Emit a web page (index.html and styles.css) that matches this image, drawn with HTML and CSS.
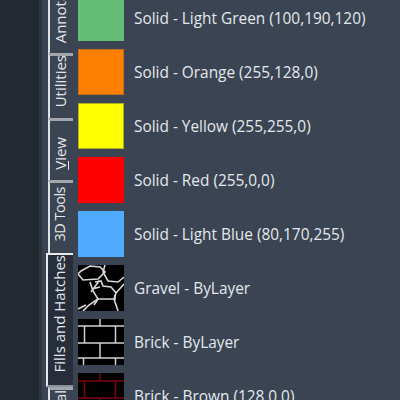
FILE: index.html
```html
<!DOCTYPE html>
<html lang="en">

<head>
    <meta charset="UTF-8">
    <meta name="viewport" content="width=device-width, initial-scale=1.0">
    <title>Tool Palette</title>
    <link rel="stylesheet" href="styles.css">
</head>

<body>
    <div class="canvas"></div>
    <div class="strip"></div>

    <!-- Palette tabs, read bottom to top -->
    <div class="tabs">
        <div class="tab tab-annotate"><span>Annotate</span></div>
        <div class="tab tab-utilities"><span>Utilities</span></div>
        <div class="tab tab-view"><span><u>V</u>iew</span></div>
        <div class="tab tab-tools"><span>3D Tools</span></div>
        <div class="tab tab-fills active"><span>Fills and Hatches</span></div>
        <div class="tab tab-general"><span>General</span></div>
    </div>

    <ul class="palette">
        <li class="row">
            <div class="swatch green"></div>
            <span>Solid - Light Green (100,190,120)</span>
        </li>
        <li class="row">
            <div class="swatch orange"></div>
            <span>Solid - Orange (255,128,0)</span>
        </li>
        <li class="row">
            <div class="swatch yellow"></div>
            <span>Solid - Yellow (255,255,0)</span>
        </li>
        <li class="row">
            <div class="swatch red"></div>
            <span>Solid - Red (255,0,0)</span>
        </li>
        <li class="row">
            <div class="swatch blue"></div>
            <span>Solid - Light Blue (80,170,255)</span>
        </li>
        <li class="row">
            <svg class="swatch hatch" viewBox="0 0 46 46">
                <g fill="none" stroke="#d8d8d8" stroke-width="1.6">
                    <path d="M3 6 12 1 22 2 27 7 20 14 5 15 0 9Z" />
                    <path d="M27 0 25 7 30 16 40 17 46 12" />
                    <path d="M12 17 15 26 20 34 11 40 5 46" />
                    <path d="M17 17 23 16 25 21 33 22 38 28 36 34 20 34" />
                    <path d="M38 28 46 19M36 34 40 46M21 16 13 27M14 24 22 22M20 34 16 40M37 30 37 35M0 44 8 40" />
                </g>
            </svg>
            <span>Gravel - ByLayer</span>
        </li>
        <li class="row">
            <svg class="swatch hatch" viewBox="0 0 46 46">
                <g fill="none" stroke="#d0d0d0" stroke-width="1.5">
                    <path d="M0 7H46M0 24H46M0 39H46" />
                    <path d="M22 0V7M6.500 7V24M37.500 7V24M22 24V39M5.500 39V46M37.500 39V46" />
                </g>
            </svg>
            <span>Brick - ByLayer</span>
        </li>
        <li class="row">
            <svg class="swatch hatch" viewBox="0 0 46 46">
                <g fill="none" stroke="#800010" stroke-width="1.5">
                    <path d="M0 8H46M0 25H46M0 40H46" />
                    <path d="M22 0V8M6.500 8V25M37.500 8V25M22 25V40" />
                </g>
            </svg>
            <span>Brick - Brown (128,0,0)</span>
        </li>
    </ul>
</body>

</html>
```

FILE: styles.css
```css
html,
body {
    height: 100%;
}

body {
    display: flex;
    margin: 0;
    overflow: hidden;
    background-color: #3b4453;
    font-family: "Open Sans", "Noto Sans", sans-serif;
    color: #e4e8ec;
}

.canvas {
    width: 39px;
    flex-shrink: 0;
    background-color: #222930;
}

.strip {
    width: 9px;
    flex-shrink: 0;
    background-color: #3a4351;
    border-left: 3px solid #2d343f;
    box-sizing: border-box;
}

.tabs {
    width: 27px;
    flex-shrink: 0;
    display: flex;
    flex-direction: column;
    margin-top: -27px;
}

.tab {
    flex-shrink: 0;
    box-sizing: border-box;
    display: flex;
    justify-content: center;
    align-items: flex-end;
    width: 25px;
    padding-right: 3px;
    border-left: 2px solid #dfe1e4;
    border-top: 3px solid #a3a7ad;
    font-size: 15px;
    line-height: 18px;
    white-space: nowrap;
}

.tab span {
    writing-mode: vertical-rl;
    transform: rotate(180deg);
}

.tab-annotate {
    height: 80px;
    padding-bottom: 10px;
}

.tab-utilities {
    height: 65px;
    padding-bottom: 11px;
}

.tab-view {
    height: 62px;
    padding-bottom: 10px;
}

.tab-tools {
    height: 73px;
    align-items: flex-start;
    font-size: 14.5px;
    letter-spacing: -0.5px;
}

.tab-tools span {
    margin-top: 4px;
}

.tab-fills {
    height: 134px;
    padding-bottom: 13px;
}

.tab-general {
    height: 70px;
    align-items: flex-start;
}

.tab.active {
    width: 27px;
    margin-left: -2px;
    background-color: #272d39;
    border-left-color: #e6e8ea;
    border-top: 2px solid #e6e8ea;
    border-bottom: 2px solid #8d9197;
}

.palette {
    list-style: none;
    margin: -5px 0 0;
    padding: 0 0 0 3px;
    display: flex;
    flex-direction: column;
    gap: 8px;
    font-size: 15.4px;
}

.row {
    display: flex;
    align-items: center;
    gap: 10px;
    white-space: nowrap;
}

.row span {
    padding-top: 1px;
}

.swatch {
    display: block;
    width: 46px;
    height: 46px;
    flex-shrink: 0;
    box-sizing: border-box;
}

.green {
    background-color: #64be78;
}

.orange {
    background-color: #ff8000;
    border: 1px solid #c2701c;
}

.yellow {
    background-color: #ffff00;
    border: 1px solid #b0b020;
}

.red {
    background-color: #ff0000;
}

.blue {
    background-color: #50aaff;
}

.hatch {
    background-color: #000000;
}
```
